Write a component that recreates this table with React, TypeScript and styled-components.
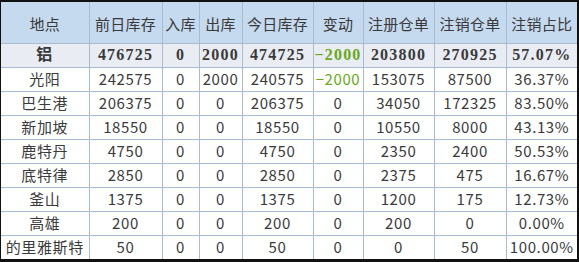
import React from 'react'
import styled, { createGlobalStyle } from 'styled-components'

const GlobalStyle = createGlobalStyle`
  html, body {
    margin: 0;
    padding: 0;
    background: #ffffff;
  }
`

interface Row {
  place: string
  prev: number
  inQty: number
  outQty: number
  today: number
  change: number
  reg: number
  cancel: number
  ratio: string
}

const COL_WIDTHS = [88, 73, 37, 43, 71, 50, 71, 72, 71]
const HEADERS = ['地点', '前日库存', '入库', '出库', '今日库存', '变动', '注册仓单', '注销仓单', '注销占比']

const total: Row = {
  place: '铝', prev: 476725, inQty: 0, outQty: 2000, today: 474725,
  change: -2000, reg: 203800, cancel: 270925, ratio: '57.07%',
}

const rows: Row[] = [
  { place: '光阳', prev: 242575, inQty: 0, outQty: 2000, today: 240575, change: -2000, reg: 153075, cancel: 87500, ratio: '36.37%' },
  { place: '巴生港', prev: 206375, inQty: 0, outQty: 0, today: 206375, change: 0, reg: 34050, cancel: 172325, ratio: '83.50%' },
  { place: '新加坡', prev: 18550, inQty: 0, outQty: 0, today: 18550, change: 0, reg: 10550, cancel: 8000, ratio: '43.13%' },
  { place: '鹿特丹', prev: 4750, inQty: 0, outQty: 0, today: 4750, change: 0, reg: 2350, cancel: 2400, ratio: '50.53%' },
  { place: '底特律', prev: 2850, inQty: 0, outQty: 0, today: 2850, change: 0, reg: 2375, cancel: 475, ratio: '16.67%' },
  { place: '釜山', prev: 1375, inQty: 0, outQty: 0, today: 1375, change: 0, reg: 1200, cancel: 175, ratio: '12.73%' },
  { place: '高雄', prev: 200, inQty: 0, outQty: 0, today: 200, change: 0, reg: 200, cancel: 0, ratio: '0.00%' },
  { place: '的里雅斯特', prev: 50, inQty: 0, outQty: 0, today: 50, change: 0, reg: 0, cancel: 50, ratio: '100.00%' },
]

const StockRow: React.FC<{ row: Row; bold?: boolean }> = ({ row, bold }) => (
  <BodyRow $bold={bold}>
    <Cell>{row.place}</Cell>
    <Cell>{row.prev}</Cell>
    <Cell>{row.inQty}</Cell>
    <Cell>{row.outQty}</Cell>
    <Cell>{row.today}</Cell>
    <Cell $green={row.change < 0}>{row.change < 0 ? `−${Math.abs(row.change)}` : row.change}</Cell>
    <Cell>{row.reg}</Cell>
    <Cell>{row.cancel}</Cell>
    <Cell>{row.ratio}</Cell>
  </BodyRow>
)

const App: React.FC = () => (
  <>
    <GlobalStyle />
    <Frame>
      <Table>
        <colgroup>
          {COL_WIDTHS.map((w, i) => (
            <col key={i} style={{ width: w }} />
          ))}
        </colgroup>
        <thead>
          <HeadRow>
            {HEADERS.map((h) => (
              <HeadCell key={h}>{h}</HeadCell>
            ))}
          </HeadRow>
        </thead>
        <tbody>
          <StockRow row={total} bold />
          {rows.map((r) => (
            <StockRow key={r.place} row={r} />
          ))}
        </tbody>
      </Table>
    </Frame>
  </>
)

export default App

// ---------- styles ----------
const Frame = styled.div`
  width: 576px;
  border-style: solid;
  border-color: #111;
  border-width: 2px 2px 3px 1px;
  background: #fff;
`

const Table = styled.table`
  width: 576px;
  table-layout: fixed;
  border-collapse: collapse;
  font-family: "Noto Sans CJK SC", "Liberation Sans", sans-serif;
  font-size: 15px;
  color: #3a3a3a;
`

const HeadRow = styled.tr`
  height: 41px;
  background: #c5d9ef;
`

const HeadCell = styled.th`
  font-weight: normal;
  text-align: center;
  padding: 2px 0 0;
  border: 1px solid #a9bccf;
  border-top: none;
  color: #3a3a3a;
  letter-spacing: 0.3px;
  &:first-child { border-left: none; }
  &:last-child { border-right: none; }
`

const BodyRow = styled.tr<{ $bold?: boolean }>`
  height: 24px;
  background: ${(p) => (p.$bold ? '#e9edf3' : '#ffffff')};
  font-weight: ${(p) => (p.$bold ? 700 : 400)};
  letter-spacing: ${(p) => (p.$bold ? '1.2px' : '0.6px')};
  ${(p) => p.$bold && `font-family: "Liberation Serif", "Noto Sans CJK SC", serif; font-size: 16px;`}
  &:last-child td { border-bottom: none; }
`

const Cell = styled.td<{ $green?: boolean }>`
  text-align: center;
  padding: 0;
  line-height: 22px;
  white-space: nowrap;
  border: 1px solid #a9bccf;
  color: ${(p) => (p.$green ? '#6aa820' : '#3a3a3a')};
  &:first-child { border-left: none; }
  &:last-child { border-right: none; }
`
